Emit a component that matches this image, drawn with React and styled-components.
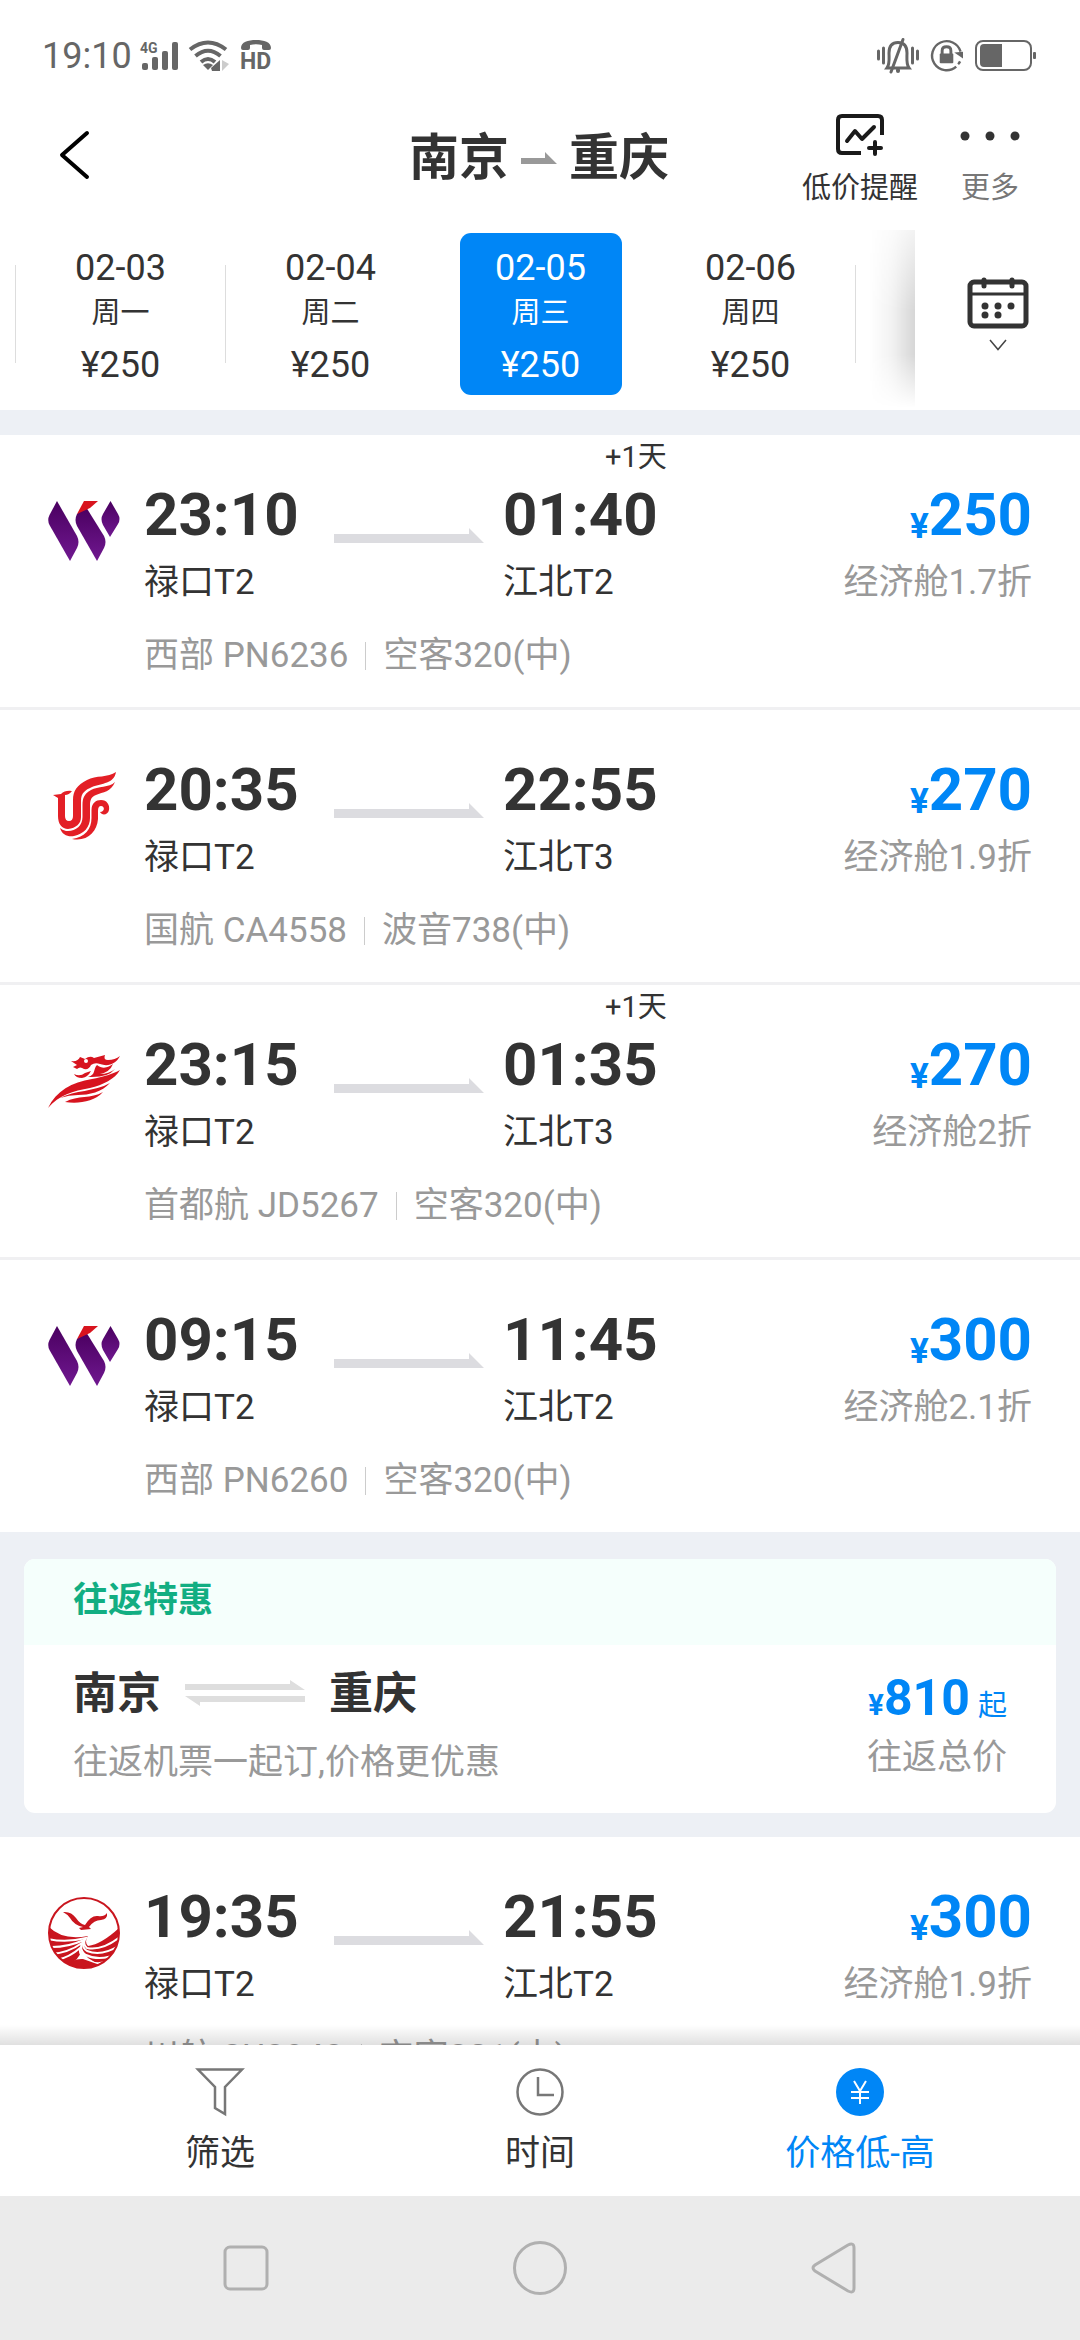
import React, { useState } from "react";
import styled, { createGlobalStyle } from "styled-components";

const GlobalStyle = createGlobalStyle`
  * {
    box-sizing: border-box;
  }
  body {
    margin: 0;
    background: #fff;
    color: #333;
    font-family: Roboto, "Noto Sans CJK SC", sans-serif;
  }
  button {
    margin: 0;
    padding: 0;
    border: 0;
    background: none;
    color: inherit;
    font: inherit;
    cursor: pointer;
  }
  svg {
    display: block;
    overflow: visible;
  }
  h1, h2, p {
    margin: 0;
  }
`;

const Screen = styled.div`
  display: flex;
  flex-direction: column;
  height: 100vh;
  overflow: hidden;
`;

/* status bar */
const StatusBar = styled.div`
  display: flex;
  align-items: center;
  justify-content: space-between;
  flex: none;
  height: 80px;
  padding: 32px 43px 0 42px;
  color: #666;
`;
const StatusGroup = styled.div`
  display: flex;
  align-items: center;
  gap: ${(props) => props.$gap}px;
`;
const Clock = styled.span`
  font-size: 36px;
  line-height: 48px;
`;

/* header */
const Header = styled.header`
  display: grid;
  grid-template-columns: 1fr auto 1fr;
  flex: none;
  height: 138px;
  padding: 0 60px 0 58px;
`;
const BackButton = styled.button`
  justify-self: start;
  width: 60px;
  height: 150px;
`;
const Title = styled.h1`
  display: flex;
  align-items: center;
  gap: 12px;
  height: 156px;
  font-size: 50px;
  line-height: 60px;
  font-weight: 700;
`;
const HeaderActions = styled.div`
  display: flex;
  justify-content: flex-end;
  align-items: flex-start;
  gap: 42px;
  padding-top: 33px;
`;
const HeaderButton = styled.button`
  display: flex;
  flex-direction: column;
  align-items: center;
  gap: 16px;
  color: ${(props) => (props.$muted ? "#777" : "#333")};
  font-size: 29px;
  line-height: 32px;
  white-space: nowrap;
`;

/* dates */
const DateBar = styled.section`
  display: flex;
  flex: none;
  height: 192px;
`;
const DateStrip = styled.div`
  position: relative;
  display: flex;
  align-items: center;
  flex: 1;
  overflow: hidden;
  padding-left: 15px;
`;
const DayDivider = styled.span`
  flex: none;
  width: 1px;
  height: 98px;
  background: ${(props) => (props.$hidden ? "transparent" : "#ddd")};
`;
const DaySlot = styled.div`
  display: flex;
  justify-content: center;
  flex: none;
  width: 209px;
`;
const Day = styled.button`
  display: flex;
  flex-direction: column;
  align-items: center;
  width: 162px;
  height: 162px;
  padding-top: 17px;
  border-radius: 11px;
  background: ${(props) => (props.$active ? "#0086f6" : "transparent")};
  color: ${(props) => (props.$active ? "#fff" : "#333")};
  font-size: 36px;
  line-height: 36px;
`;
const Weekday = styled.span`
  margin: 12px 0 19px;
  font-size: 29px;
  line-height: 30px;
`;
const StripShade = styled.span`
  position: absolute;
  top: 12px;
  right: 0;
  bottom: 2px;
  width: 46px;
  background: linear-gradient(to left, rgba(0, 0, 0, 0.16), rgba(0, 0, 0, 0.05) 50%, transparent);
  mask-image: linear-gradient(to bottom, rgba(0, 0, 0, 0.3), #000 45%, #000 70%, transparent);
`;
const CalendarButton = styled.button`
  display: flex;
  flex-direction: column;
  align-items: center;
  gap: 11px;
  width: 165px;
  padding-top: 59px;
`;

/* list */
const List = styled.main`
  position: relative;
  flex: 1;
  min-height: 0;
  overflow: hidden;
  padding-top: 25px;
  background: #edf0f5;
`;
const ListShade = styled.span`
  position: absolute;
  right: 0;
  bottom: 0;
  left: 0;
  height: 20px;
  background: linear-gradient(to bottom, transparent, rgba(0, 0, 0, 0.12));
`;
const Flight = styled.article`
  display: grid;
  grid-template-columns: 96px 190px 169px 1fr auto;
  padding: 50px 48px 31px;
  border-bottom: ${(props) => (props.$last ? 0 : 3)}px solid #f0f0f2;
  background: #fff;
`;
const Logo = styled.div`
  padding-top: 10px;
`;
const Stop = styled.div`
  position: relative;
`;
const Time = styled.p`
  font-size: 60px;
  line-height: 60px;
  font-weight: 700;
`;
const Airport = styled.p`
  margin-top: 18px;
  font-size: 35px;
  line-height: 40px;
  white-space: nowrap;
`;
const NextDay = styled.span`
  position: absolute;
  top: -43px;
  left: 102px;
  font-size: 29px;
  line-height: 30px;
  white-space: nowrap;
`;
const ArrowCell = styled.div`
  padding-top: 43px;
`;
const Fare = styled.div`
  text-align: right;
`;
const Price = styled.p`
  display: flex;
  justify-content: flex-end;
  align-items: flex-end;
  color: #0086f6;
  font-size: ${(props) => (props.$small ? 50 : 60)}px;
  line-height: 60px;
  font-weight: 700;
`;
const Yen = styled.span`
  font-size: ${(props) => (props.$small ? 29 : 35)}px;
  line-height: ${(props) => (props.$small ? 46 : 36)}px;
`;
const From = styled.span`
  margin-left: 8px;
  font-size: 29px;
  line-height: 44px;
  font-weight: 400;
`;
const Cabin = styled(Airport)`
  color: #999;
`;
const Detail = styled.p`
  display: flex;
  align-items: center;
  grid-column: 2 / -1;
  margin-top: 33px;
  color: #999;
  font-size: 35px;
  line-height: 40px;
`;
const DetailDivider = styled.span`
  width: 1px;
  height: 28px;
  margin: 0 17px;
  background: #ccc;
`;

/* round trip card */
const Card = styled.section`
  margin: 27px 24px 24px;
  overflow: hidden;
  border-radius: 11px;
  background: #fff;
`;
const CardTitle = styled.h2`
  padding: 18px 49px 20px;
  background: #f5fffc;
  color: #12ae82;
  font-size: 35px;
  line-height: 48px;
  font-weight: 700;
`;
const CardBody = styled.div`
  display: flex;
  justify-content: space-between;
  height: 168px;
  padding: 19px 49px 0;
`;
const Route = styled.p`
  display: flex;
  align-items: center;
  gap: 24px;
  font-size: 44px;
  line-height: 60px;
  font-weight: 700;
`;
const CardPrice = styled.div`
  padding-top: 4px;
  text-align: right;
`;
const CardNote = styled.p`
  margin-top: ${(props) => props.$top}px;
  color: #999;
  font-size: 35px;
  line-height: 40px;
`;

/* bottom */
const TabBar = styled.nav`
  display: flex;
  flex: none;
  height: 151px;
  padding: 0 60px;
`;
const Tab = styled.button`
  display: flex;
  flex-direction: column;
  align-items: center;
  flex: 1;
  gap: 18px;
  padding-top: 23px;
  color: ${(props) => (props.$active ? "#0086f6" : "#333")};
  font-size: 35px;
  line-height: 40px;
`;
const SystemNav = styled.nav`
  display: flex;
  align-items: center;
  justify-content: center;
  flex: none;
  height: 144px;
  background: #ebebeb;
`;
const SystemButton = styled.button`
  display: flex;
  justify-content: center;
  width: 294px;
`;

const SignalIcon = () => (
  <svg width="40" height="32" viewBox="0 0 40 32" fill="#666">
    <text x="0" y="13" fontSize="14" fontWeight="700" fontFamily="Roboto, sans-serif">
      4G
    </text>
    <rect x="2" y="23" width="6" height="7" rx="2" />
    <rect x="12" y="17" width="6" height="13" rx="2" />
    <rect x="22" y="11" width="6" height="19" rx="2" />
    <rect x="32" y="2" width="6" height="28" rx="2" />
  </svg>
);

const WifiIcon = () => (
  <svg width="44" height="32" viewBox="0 0 44 32" fill="none" stroke="#666" strokeWidth="4">
    <path d="M2 9.500Q20 -4.500 38 9.500" />
    <path d="M7.500 16Q20 5.500 32.500 16" />
    <path d="M13 22Q20 16 27 22" />
    <path d="M15 25Q20 21.500 25 25L20 30Z" fill="#666" stroke="none" />
    <path d="M23 28L32 20V31H24Z" fill="#666" stroke="none" />
    <path d="M34 20L41 24L34 31Z" fill="#ccc" stroke="none" />
  </svg>
);

const HdIcon = () => (
  <svg width="32" height="34" viewBox="0 0 32 34" fill="#666">
    <path d="M1 9C1 3 8 1 16 1S31 3 31 9Q31 11 29 11H24Q22 11 22 9V6Q16 4.500 10 6V9Q10 11 8 11H3Q1 11 1 9Z" />
    <text x="0" y="30" fontSize="23" fontWeight="700" fontFamily="Roboto, sans-serif">
      HD
    </text>
  </svg>
);

const MuteIcon = () => (
  <svg width="42" height="36" viewBox="0 0 42 36" fill="none" stroke="#666" strokeWidth="3" strokeLinecap="round">
    <path d="M1.500 13V21M6.500 10V25M35.500 10V25M40.500 13V21" />
    <path d="M10 30C13 26 12 20 12 15C12 8 15 4.500 21 4.500S30 8 30 15C30 20 29 26 32 30Z" />
    <path d="M26 1.500L14 34" />
    <path d="M21 33V32" strokeWidth="4" />
  </svg>
);

const LockIcon = () => (
  <svg width="32" height="32" viewBox="1 1 33 33" fill="none" stroke="#666">
    <path d="M27 28.500A15 15 0 1 1 31.500 13" strokeWidth="2.500" />
    <path d="M25 14L34 20V13Z" fill="#666" stroke="none" />
    <path d="M31 23Q30 25 29 26" strokeWidth="2.500" />
    <rect x="10" y="15" width="14" height="10" rx="1" fill="#666" stroke="none" />
    <path d="M12.500 16V12Q12.500 8 17 8T21.500 12V16" strokeWidth="3" />
  </svg>
);

const BatteryIcon = () => (
  <svg width="62" height="32" viewBox="0 0 62 32" fill="none" stroke="#666">
    <rect x="1" y="1" width="55" height="29" rx="7" strokeWidth="2" />
    <path d="M9 4H27V27H9Q5 27 5 23V8Q5 4 9 4Z" fill="#666" stroke="none" />
    <rect x="58" y="12" width="3" height="7" rx="1" fill="#666" stroke="none" />
  </svg>
);

const BackIcon = () => (
  <svg width="32" height="50" viewBox="0 0 32 50" fill="none" stroke="#000" strokeWidth="4" strokeLinecap="round" strokeLinejoin="round">
    <path d="M29 3L4 25L29 47" />
  </svg>
);

const AlertIcon = () => (
  <svg width="50" height="43" viewBox="0 0 50 43" fill="none" stroke="#1a1a1a" strokeWidth="4" strokeLinejoin="round">
    <path d="M26 40H7Q3 40 3 36V7Q3 3 7 3H43Q47 3 47 7V22" />
    <path d="M12 28L20 18L27 26L39 14" strokeLinecap="round" />
    <path d="M34 35H46M40 29V41" strokeLinecap="round" />
  </svg>
);

const MoreIcon = () => (
  <svg width="60" height="43" viewBox="0 0 60 43" fill="#333">
    <circle cx="5" cy="23" r="4.500" />
    <circle cx="30" cy="23" r="4.500" />
    <circle cx="55" cy="23" r="4.500" />
  </svg>
);

const CalendarIcon = () => (
  <svg width="60" height="52" viewBox="0 0 60 52" fill="none" stroke="#333">
    <rect x="2" y="5" width="56" height="44" rx="4" strokeWidth="5" />
    <path d="M2 17H58" strokeWidth="3" />
    <path d="M16 3V9M44 3V9" strokeWidth="5" strokeLinecap="round" />
    <g fill="#333" stroke="none">
      <circle cx="17" cy="29" r="3.500" />
      <circle cx="30" cy="29" r="3.500" />
      <circle cx="43" cy="29" r="3.500" />
      <circle cx="17" cy="38" r="3.500" />
      <circle cx="30" cy="38" r="3.500" />
    </g>
  </svg>
);

const DownIcon = () => (
  <svg width="18" height="12" viewBox="0 0 18 12" fill="none" stroke="#444" strokeWidth="1.500">
    <path d="M1 0L9 9.500L17 0" />
  </svg>
);

const TitleArrow = () => (
  <svg width="36" height="13" viewBox="0 0 36 13" fill="#999">
    <path d="M0 6H24V0L36 12H0Z" />
  </svg>
);

const LongArrow = () => (
  <svg width="150" height="15" viewBox="0 0 150 15" fill="#dcdce0">
    <path d="M0 6H135V0L150 15H0Z" />
  </svg>
);

const RoundArrow = () => (
  <svg width="120" height="28" viewBox="0 0 120 28" fill="#dedede">
    <path d="M0 4H105V0L120 10H0Z" />
    <path d="M120 22H15V26L0 16H120Z" />
  </svg>
);

const WestLogo = () => (
  <svg width="72" height="72" viewBox="0 0 72 72">
    <defs>
      <linearGradient id="west" x1="0" y1="0" x2="0" y2="1">
        <stop offset="0" stopColor="#4a0060" />
        <stop offset="1" stopColor="#701890" />
      </linearGradient>
    </defs>
    <g fill="url(#west)">
      <path d="M9 6L1.500 20Q-1 25 1.500 30L22 66L29 53Q32 47 29 41Z" />
      <path d="M38 12L29 19Q26 25 29 31L49 66L56 53Q59 47 56 41Z" />
      <path d="M62.500 6L55 19Q52 24 55 30L62 42L70 29Q73 24 70 19Z" />
    </g>
    <path d="M36 6H50L42 13L29 19Z" fill="#d8141e" />
  </svg>
);

const AirChinaLogo = () => (
  <svg width="72" height="72" viewBox="0 0 72 72" fill="#e31f26">
    <path d="M68 2C60 8 48 5 39 10C29 15 25 21 25 30V46Q25 51 21 51Q17 51 17 46V25Q21 25 24 21Q17 20 13 24L5 25L10 28V46C10 54 14 59 20 59C28 58 33 54 33 47V31C33 23 37 20 44 17C54 13 66 14 68 2Z" />
    <path d="M67 12C61 18 50 16 43 20C36 24 34.500 28 34.500 35V47C34.500 56 27 62 18 61Q14 60 12 58C14 65 20 67 26 66C36 64 42 57 42 48V36C42 30 43 27 48 25C55 22 63 22 67 12Z" />
    <path d="M24 69C37 67 43.500 59 43.500 48V40C43.500 33 48 30 53 30C59 30 62 35 61 40C60 45 54 46 52 42C57 42 57 36 53 36Q50 36 50 41V49C49 62 39 72 24 69Z" />
  </svg>
);

const CapitalLogo = () => (
  <svg width="72" height="72" viewBox="0 0 72 72" fill="#d7141f">
    <path d="M0 63C8 46 24 37 44 34C55 32 65 29 72 25C67 34 55 40 42 43C25 46 11 50 0 63Z" />
    <path d="M12 53C27 45 46 47 62 38C54 47 41 50 30 50Q21 50 12 53Z" />
    <path d="M17 57C30 50 43 54 55 47C46 57 30 59 17 57Z" />
    <path d="M40 32C48 30 45 24 49 20C55 25 61 22 65 19Q62 27 52 29Q61 29 67 24Q60 33 40 32Z" />
    <path d="M23 16Q30 17 32 12L37 14Q42 10 46 13L57 10Q55 15 60 15Q67 15 72 11C68 19 60 22 52 19Q47 17 43 20Q41 25 36 24Q32 21 29 24L25 22L29 20Z" />
    <path d="M26 29Q32 32 37 28L43 26Q40 32 34 33Q28 33 26 29Z" />
    <circle cx="38" cy="16" r="2" fill="#fff" />
  </svg>
);

const SichuanLogo = () => (
  <svg width="72" height="72" viewBox="0 0 72 72" fill="#c9151e">
    <clipPath id="sichuan">
      <circle cx="36" cy="36" r="35" />
    </clipPath>
    <path d="M15 15Q23 14 28 21Q32 27 37 28Q43 18 50 19Q56 20 59 16Q60 22 53 23Q46 23 41 30L43 32L33 33L31 31L35 30Q26 28 22 21Q19 17 15 15Z" />
    <g clipPath="url(#sichuan)">
      <path d="M0 29Q14 44 40 39Q36 45 40 49Q54 47 72 30V64Q56 72 50 67L40 61L34 53Q32 62 18 70L0 56Z" />
      <g fill="none" stroke="#fff" strokeWidth="2">
        <path d="M0 42Q18 46 38 41Q34 47 39 51Q54 54 72 40" />
        <path d="M0 50Q18 51 36 43Q33 50 39 54Q54 60 72 48" />
        <path d="M3 57Q20 56 34 46Q31 54 38 58Q52 65 72 56" />
        <path d="M9 63Q22 60 32 51Q31 58 37 62Q48 70 64 63" />
      </g>
      <path d="M16 72Q24 61 35 62Q46 66 58 70L50 74H20Z" />
    </g>
    <circle cx="36" cy="36" r="35" fill="none" stroke="#c9151e" strokeWidth="2" />
  </svg>
);

const FilterIcon = () => (
  <svg width="48" height="48" viewBox="0 0 48 48" fill="none" stroke="#777" strokeWidth="2.500">
    <path d="M2 1.500H46L29 19V46L19 40V19Z" />
  </svg>
);

const TimeIcon = () => (
  <svg width="48" height="48" viewBox="0 0 48 48" fill="none" stroke="#777" strokeWidth="2.500">
    <circle cx="24" cy="24" r="22.500" />
    <path d="M22 9V27H38" />
  </svg>
);

const PriceIcon = () => (
  <svg width="48" height="48" viewBox="0 0 48 48">
    <circle cx="24" cy="24" r="24" fill="#0086f6" />
    <path d="M18 13L24 23L30 13M15 24H33M15 30H33M24 23V36" fill="none" stroke="#fff" strokeWidth="2" />
  </svg>
);

const days = [
  { date: "02-03", weekday: "周一", price: "¥250" },
  { date: "02-04", weekday: "周二", price: "¥250" },
  { date: "02-05", weekday: "周三", price: "¥250" },
  { date: "02-06", weekday: "周四", price: "¥250" },
];

const flights = [
  { logo: <WestLogo />, dep: "23:10", from: "禄口T2", arr: "01:40", to: "江北T2", next: true, price: 250, cabin: "经济舱1.7折", flight: "西部 PN6236", plane: "空客320(中)" },
  { logo: <AirChinaLogo />, dep: "20:35", from: "禄口T2", arr: "22:55", to: "江北T3", price: 270, cabin: "经济舱1.9折", flight: "国航 CA4558", plane: "波音738(中)" },
  { logo: <CapitalLogo />, dep: "23:15", from: "禄口T2", arr: "01:35", to: "江北T3", next: true, price: 270, cabin: "经济舱2折", flight: "首都航 JD5267", plane: "空客320(中)" },
  { logo: <WestLogo />, dep: "09:15", from: "禄口T2", arr: "11:45", to: "江北T2", price: 300, cabin: "经济舱2.1折", flight: "西部 PN6260", plane: "空客320(中)" },
];

const lastFlight = { logo: <SichuanLogo />, dep: "19:35", from: "禄口T2", arr: "21:55", to: "江北T2", price: 300, cabin: "经济舱1.9折", flight: "川航 3U8948", plane: "空客321(中)" };

const FlightRow = ({ item, last }) => (
  <Flight $last={last}>
    <Logo>{item.logo}</Logo>
    <Stop>
      <Time>{item.dep}</Time>
      <Airport>{item.from}</Airport>
    </Stop>
    <ArrowCell>
      <LongArrow />
    </ArrowCell>
    <Stop>
      {item.next && <NextDay>+1天</NextDay>}
      <Time>{item.arr}</Time>
      <Airport>{item.to}</Airport>
    </Stop>
    <Fare>
      <Price>
        <Yen>¥</Yen>
        {item.price}
      </Price>
      <Cabin>{item.cabin}</Cabin>
    </Fare>
    <Detail>
      {item.flight}
      <DetailDivider />
      {item.plane}
    </Detail>
  </Flight>
);

const App = () => {
  const [selected, setSelected] = useState(2);

  return (
    <Screen>
      <GlobalStyle />
      <StatusBar>
        <StatusGroup $gap={8}>
          <Clock>19:10</Clock>
          <SignalIcon />
          <WifiIcon />
          <HdIcon />
        </StatusGroup>
        <StatusGroup $gap={12}>
          <MuteIcon />
          <LockIcon />
          <BatteryIcon />
        </StatusGroup>
      </StatusBar>

      <Header>
        <BackButton aria-label="返回">
          <BackIcon />
        </BackButton>
        <Title>
          南京
          <TitleArrow />
          重庆
        </Title>
        <HeaderActions>
          <HeaderButton>
            <AlertIcon />
            低价提醒
          </HeaderButton>
          <HeaderButton $muted>
            <MoreIcon />
            更多
          </HeaderButton>
        </HeaderActions>
      </Header>

      <DateBar>
        <DateStrip>
          <DayDivider />
          {days.map((day, i) => (
            <React.Fragment key={day.date}>
              <DaySlot>
                <Day $active={i === selected} onClick={() => setSelected(i)}>
                  <span>{day.date}</span>
                  <Weekday>{day.weekday}</Weekday>
                  <span>{day.price}</span>
                </Day>
              </DaySlot>
              <DayDivider $hidden={i === selected || i + 1 === selected} />
            </React.Fragment>
          ))}
          <StripShade />
        </DateStrip>
        <CalendarButton aria-label="日历">
          <CalendarIcon />
          <DownIcon />
        </CalendarButton>
      </DateBar>

      <List>
        {flights.map((item, i) => (
          <FlightRow key={item.flight} item={item} last={i === flights.length - 1} />
        ))}
        <Card>
          <CardTitle>往返特惠</CardTitle>
          <CardBody>
            <div>
              <Route>
                南京
                <RoundArrow />
                重庆
              </Route>
              <CardNote $top={19}>往返机票一起订,价格更优惠</CardNote>
            </div>
            <CardPrice>
              <Price $small>
                <Yen $small>¥</Yen>
                810
                <From>起</From>
              </Price>
              <CardNote $top={10}>往返总价</CardNote>
            </CardPrice>
          </CardBody>
        </Card>
        <FlightRow item={lastFlight} />
        <ListShade />
      </List>

      <TabBar>
        <Tab>
          <FilterIcon />
          筛选
        </Tab>
        <Tab>
          <TimeIcon />
          时间
        </Tab>
        <Tab $active>
          <PriceIcon />
          价格低-高
        </Tab>
      </TabBar>
      <SystemNav>
        <SystemButton aria-label="最近任务">
          <svg width="46" height="46" viewBox="0 0 46 46" fill="none" stroke="#b0b0b0" strokeWidth="3">
            <rect x="2" y="2" width="42" height="42" rx="5" />
          </svg>
        </SystemButton>
        <SystemButton aria-label="主屏幕">
          <svg width="54" height="54" viewBox="0 0 54 54" fill="none" stroke="#b0b0b0" strokeWidth="3">
            <circle cx="27" cy="27" r="25.500" />
          </svg>
        </SystemButton>
        <SystemButton aria-label="返回上一级">
          <svg width="46" height="52" viewBox="0 0 46 52" fill="none" stroke="#b0b0b0" strokeWidth="3">
            <path d="M37 3L4 23Q0 26 4 29L37 49Q43 52 43 46V6Q43 0 37 3Z" />
          </svg>
        </SystemButton>
      </SystemNav>
    </Screen>
  );
};

export default App;
